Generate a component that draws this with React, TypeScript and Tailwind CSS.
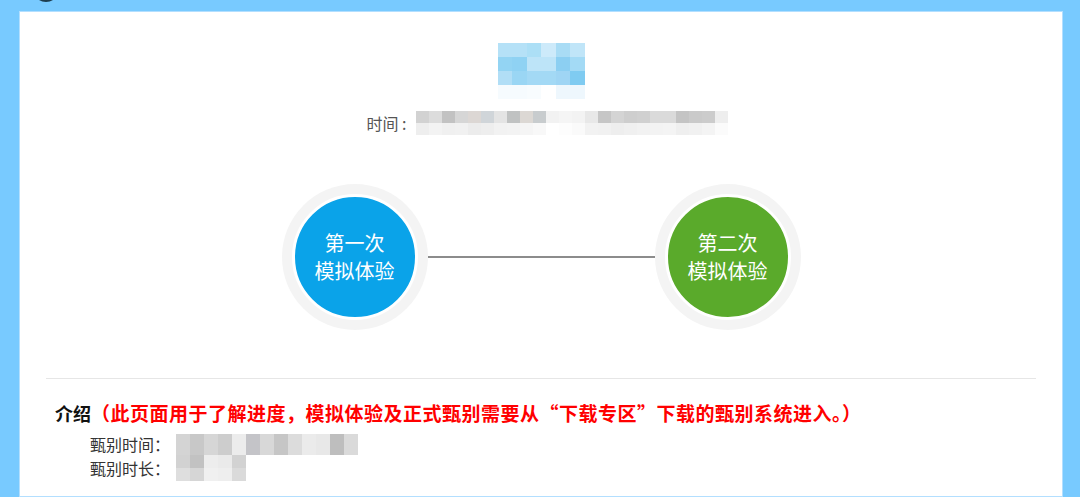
const TITLE_BLOCKS = [
  ["#b5e1f7", "#b5e1f7", "#acdff6", "#cdeafa", "#a9dcf5", "#c0e5f8"],
  ["#93d4f3", "#8fd2f3", "#bde4f8", "#bde4f8", "#8ccff2", "#a3daf5"],
  ["#b1def6", "#9ad6f4", "#a3d9f5", "#a3d9f5", "#9fd5f4", "#7fcbf1"],
  ["#f6fbfe", "#f6fbfe", "#f8fcfe", "#ffffff", "#eef7fd", "#eef7fd"],
];

const TIME_BLOCKS = [
  ["#d2d2d2", "#dcdcdc", "#c2c2c2", "#d6d6d6", "#dcd7d4", "#d0d5d9", "#e4e4e4", "#c0c2c2", "#dcd8d4", "#c8ccce", "#f2f2f2", "#f5f5f5", "#f3f3f3", "#e8e8e8", "#c6c6c6", "#d4d4d4", "#cecece", "#d0d0d0", "#dadada", "#dadada", "#c4c4c4", "#cacaca", "#cccccc", "#eeeeee"],
  ["#eeeeee", "#f3f3f3", "#f0f0f0", "#f1f1f1", "#ececec", "#eeeeee", "#f2f2f2", "#f3f3f3", "#f5f5f5", "#f8f8f8", "#ffffff", "#fdfdfd", "#fafafa", "#f2f2f2", "#f1f1f1", "#eeeeee", "#f0f0f0", "#f2f2f2", "#f3f3f3", "#f4f4f4", "#efefef", "#f1f1f1", "#f4f4f4", "#fbfbfb"],
];

const DATE_BLOCKS = [
  ["#d4d4d4", "#c8c8c8", "#d6d6d6", "#cdcdcd", "#ececec", "#c4c4c8", "#d8d8d8", "#c6c6c6", "#dcdcdc", "#ebebeb", "#e8e8e8", "#bebebe", "#dadada"],
];

const DURATION_BLOCKS = [
  ["#d2d2d2", "#c2c2c2", "#ededed", "#eaeaea", "#d2d2d2"],
  ["#dedede", "#d6d6d6", "#f0f0f0", "#eeeeee", "#dadada"],
];

export default function App() {
  return (
    <div className="min-h-[497px] bg-[#78caff] font-['Noto_Sans_CJK_SC','Noto_Sans',sans-serif]">
      {/* cut-off header strip */}
      <div className="h-[11px] overflow-hidden pl-[33px]">
        <div className="-mt-[24px] h-[26px] w-[26px] rounded-full bg-[#1d3d4f]" />
      </div>

      <main className="ml-[19px] w-[1044px] min-h-[486px] border border-[#b3dfff] bg-white px-[26px]">
        <div className="flex flex-col items-center pt-[31px]">
          <Mosaic rows={TITLE_BLOCKS} cell="w-[14.5px] h-[14px]" />
          <div className="mt-[12px] flex items-center pl-[12px] text-[16px] text-[#555]">
            <span className="leading-[24px]">时间 :</span>
            <span className="ml-[9px]">
              <Mosaic rows={TIME_BLOCKS} cell="w-[13px] h-[12px]" />
            </span>
          </div>
        </div>

        <div className="mt-[49px] flex items-center justify-center">
          <Step label="第一次" color="bg-[#0aa3e9]" />
          <div className="h-[2px] w-[227px] bg-[#8c8c8c]" />
          <Step label="第二次" color="bg-[#5aaa2b]" />
        </div>

        <div className="mt-[48px] h-px bg-[#e6e6e6]" />

        <section className="pl-[9px] pt-[21px]">
          <h2 className="flex items-center text-[18px] leading-[26px] font-bold text-[#111]">
            介绍
            <span className="text-[19px] tracking-[0.5px] text-[#ff0000]">
              （此页面用于了解进度，模拟体验及正式甄别需要从“下载专区”下载的甄别系统进入。）
            </span>
          </h2>
          <div className="pl-[35px] pt-[7px] text-[16px] leading-[22px] text-[#333]">
            <div className="flex items-center">
              <span>甄别时间：</span>
              <span className="ml-[6px]">
                <Mosaic rows={DATE_BLOCKS} cell="w-[14px] h-[21px]" />
              </span>
            </div>
            <div className="flex items-center">
              <span>甄别时长：</span>
              <span className="ml-[6px]">
                <Mosaic rows={DURATION_BLOCKS} cell="w-[14px] h-[13px]" />
              </span>
            </div>
          </div>
        </section>
      </main>
    </div>
  );
}

function Step({ label, color }: { label: string; color: string }) {
  return (
    <div className="h-[146px] w-[146px] rounded-full bg-[#f4f4f4] p-[10px]">
      <div
        className={`flex h-full w-full flex-col items-center justify-center rounded-full border-[3px] border-white ${color} text-[20px] leading-[28px] text-white`}
      >
        <span>{label}</span>
        <span>模拟体验</span>
      </div>
    </div>
  );
}

function Mosaic({ rows, cell }: { rows: string[][]; cell: string }) {
  return (
    <div className="flex flex-col">
      {rows.map((row, i) => (
        <div key={i} className="flex">
          {row.map((c, j) => (
            <span key={j} className={cell} style={{ backgroundColor: c }} />
          ))}
        </div>
      ))}
    </div>
  );
}
